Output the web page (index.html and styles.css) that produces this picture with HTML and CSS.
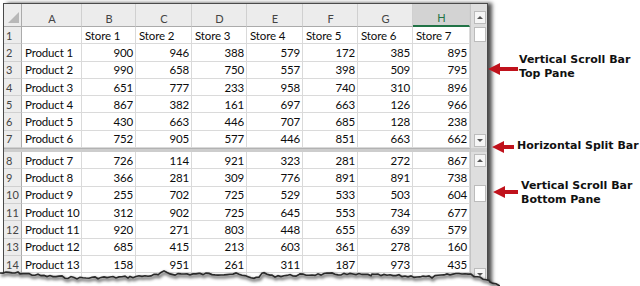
FILE: index.html
```html
<!DOCTYPE html>
<html lang="en">
<head>
    <meta charset="UTF-8">
    <meta name="viewport" content="width=device-width, initial-scale=1.0">
    <title>Split Panes</title>
    <link rel="stylesheet" href="styles.css">
</head>
<body>
    <div class="sheet">
        <div class="grid" id="grid"></div>
        <div class="vscroll">
            <div class="vpane top">
                <span class="sbtn up"></span>
                <span class="thumb"></span>
                <span class="sbtn down"></span>
            </div>
            <div class="vsplit"></div>
            <div class="vpane bottom">
                <span class="sbtn up"></span>
                <span class="thumb"></span>
                <span class="sbtn down"></span>
            </div>
        </div>
    </div>

    <svg class="torn" width="500" height="286" viewBox="0 0 500 286">
        <defs>
            <filter id="blur" x="-5%" y="-50%" width="110%" height="200%">
                <feGaussianBlur stdDeviation="1.6"/>
            </filter>
        </defs>
        <path id="tornFill" fill="#fff"/>
        <path id="tornShadow" fill="none" stroke="#000" stroke-opacity="0.55" stroke-width="3" filter="url(#blur)" transform="translate(1,2)"/>
        <path id="tornEdge" fill="none" stroke="#2a2a2a" stroke-width="1.6"/>
    </svg>

    <svg class="arrow a1" width="30" height="12" viewBox="0 0 30 12"><polygon points="0,6 12,0 12,4 30,4 30,8 12,8 12,12"/></svg>
    <svg class="arrow a2" width="22" height="12" viewBox="0 0 22 12"><polygon points="0,6 12,0 12,4 22,4 22,8 12,8 12,12"/></svg>
    <svg class="arrow a3" width="25" height="12" viewBox="0 0 25 12"><polygon points="0,6 12,0 12,4 25,4 25,8 12,8 12,12"/></svg>

    <div class="note n1">Vertical Scroll Bar<br>Top Pane</div>
    <div class="note n2">Horizontal Split Bar</div>
    <div class="note n3">Vertical Scroll Bar<br>Bottom Pane</div>

    <script>
        const products = [
            [900, 946, 388, 579, 172, 385, 895],
            [990, 658, 750, 557, 398, 509, 795],
            [651, 777, 233, 958, 740, 310, 896],
            [867, 382, 161, 697, 663, 126, 966],
            [430, 663, 446, 707, 685, 128, 238],
            [752, 905, 577, 446, 851, 663, 662],
            [726, 114, 921, 323, 281, 272, 867],
            [366, 281, 309, 776, 891, 891, 738],
            [255, 702, 725, 529, 533, 503, 604],
            [312, 902, 725, 645, 553, 734, 677],
            [920, 271, 803, 448, 655, 639, 579],
            [685, 415, 213, 603, 361, 278, 160],
            [158, 951, 261, 311, 187, 973, 435],
            [544, 208, 617, 392, 470, 815, 329]
        ];
        const grid = document.getElementById("grid");

        function cell(cls, text) {
            const el = document.createElement("div");
            el.className = "cell " + cls;
            el.textContent = text;
            grid.appendChild(el);
        }

        cell("hd corner", "");
        ["A", "B", "C", "D", "E", "F", "G", "H"].forEach(letter => {
            cell(letter === "H" ? "hd sel" : "hd", letter);
        });

        cell("rh", "1");
        cell("txt", "");
        for (let i = 1; i <= 7; i++) cell("txt", "Store " + i);

        products.forEach((values, i) => {
            if (i === 6) {
                const split = document.createElement("div");
                split.className = "split";
                grid.appendChild(split);
            }
            cell("rh", i + 2);
            cell("txt", "Product " + (i + 1));
            values.forEach(v => cell("num", v));
        });

        // ragged bottom edge of the screenshot
        const anchors = [[0,273],[20,273],[44,276],[80,278],[130,277],[158,275],[164,272],[172,274],[200,274],[236,274],[248,277],[256,278],[264,273],[272,276],[300,275],[332,274],[372,275],[402,276],[432,277],[462,273],[480,277],[490,281],[500,286]];
        let seed = 7;
        function rand() {
            seed = (seed * 9301 + 49297) % 233280;
            return seed / 233280;
        }
        let d = "";
        for (let k = 0; k < anchors.length - 1; k++) {
            const [x0, y0] = anchors[k], [x1, y1] = anchors[k + 1];
            for (let x = x0; x < x1; x += 3) {
                const y = y0 + (y1 - y0) * (x - x0) / (x1 - x0) + (rand() - 0.5) * 2.4;
                d += (d ? " L" : "M") + x + "," + y.toFixed(1);
            }
        }
        d += " L500,286";
        document.getElementById("tornEdge").setAttribute("d", d);
        document.getElementById("tornShadow").setAttribute("d", d);
        document.getElementById("tornFill").setAttribute("d", d + " L0,286 Z");
    </script>
</body>
</html>
```

FILE: styles.css
```css
html, body {
    height: 286px;
}
body {
    margin: 0;
    background-color: #fff;
    font-family: Lato, "Liberation Sans", sans-serif;
    overflow: hidden;
    position: relative;
}
.sheet {
    display: flex;
    width: 483px;
    margin: 3px 0 0 3px;
    border: 1px solid #4a4a4a;
    border-bottom: none;
    background-color: #fff;
    box-shadow: 4px 0 4px rgba(0, 0, 0, 0.7);
}
.grid {
    display: grid;
    grid-template-columns: 18px 60px 54px 56px 55px 56px 55px 55px 57px;
    grid-template-rows: 23px repeat(7, 17.3px) 4px repeat(8, 17.3px);
}
.cell {
    box-sizing: border-box;
    display: flex;
    align-items: center;
    padding: 0 2px 0 3px;
    border-right: 1px solid #dadada;
    border-bottom: 1px solid #dadada;
    font-size: 11.5px;
    letter-spacing: -0.15px;
    color: #0c0c0c;
    white-space: nowrap;
    overflow: hidden;
}
.num {
    justify-content: flex-end;
}
.hd {
    justify-content: center;
    padding-top: 6px;
    background-color: #ececec;
    border-right-color: #d0d0d0;
    border-bottom-color: #ababab;
    font-size: 11px;
    letter-spacing: 0;
    color: #444;
}
.hd.sel {
    background-color: #d3d3d3;
    color: #217346;
    border-bottom: 2px solid #217346;
}
.corner {
    position: relative;
    border-right-color: #ababab;
}
.corner::after {
    content: "";
    position: absolute;
    right: 2px;
    bottom: 3px;
    border-left: 11px solid transparent;
    border-bottom: 11px solid #b8b8b8;
}
.rh {
    padding-left: 2px;
    background-color: #ececec;
    border-right-color: #ababab;
    border-bottom-color: #d0d0d0;
    font-size: 11px;
    letter-spacing: 0;
    color: #444;
}
.split {
    grid-column: 1 / -1;
    background-color: #cdcdcd;
    border-top: 1px solid #b2b2b2;
}
.vscroll {
    box-sizing: border-box;
    width: 17px;
    display: flex;
    flex-direction: column;
    background-color: #dedede;
    border-left: 1px solid #c4c4c4;
}
.vpane {
    display: flex;
    flex-direction: column;
}
.vpane.top {
    height: 144px;
    box-sizing: border-box;
    padding: 7px 0 1px;
}
.vpane.top .thumb {
    margin-top: 3px;
    height: 15px;
}
.vpane.top .down {
    margin-top: auto;
}
.vsplit {
    height: 4px;
    background-color: #cdcdcd;
}
.vpane.bottom {
    padding-top: 2px;
}
.vpane.bottom .thumb {
    margin-top: 18px;
    height: 17px;
}
.vpane.bottom .down {
    margin-top: 66px;
}
.sbtn, .thumb {
    box-sizing: border-box;
    width: 12px;
    margin-left: 3px;
    background-color: #fff;
    border: 1px solid #bcbcbc;
}
.sbtn {
    height: 13px;
    display: flex;
    align-items: center;
    justify-content: center;
    background-color: #f6f6f6;
}
.sbtn::before {
    content: "";
    border-left: 3px solid transparent;
    border-right: 3px solid transparent;
}
.sbtn.up::before {
    border-bottom: 3px solid #555;
}
.sbtn.down::before {
    border-top: 3px solid #555;
}
.torn {
    position: absolute;
    top: 0;
    left: 0;
    pointer-events: none;
}
.arrow {
    position: absolute;
    fill: #c0121c;
}
.a1 { left: 488px; top: 63px; }
.a2 { left: 492px; top: 141px; }
.a3 { left: 493px; top: 186px; }
.note {
    position: absolute;
    font-family: "DejaVu Sans", Verdana, sans-serif;
    font-weight: bold;
    font-size: 11px;
    line-height: 14px;
    color: #111;
    white-space: nowrap;
}
.n1 { left: 519px; top: 53px; }
.n2 { left: 517px; top: 139px; }
.n3 { left: 521px; top: 179px; }
```
